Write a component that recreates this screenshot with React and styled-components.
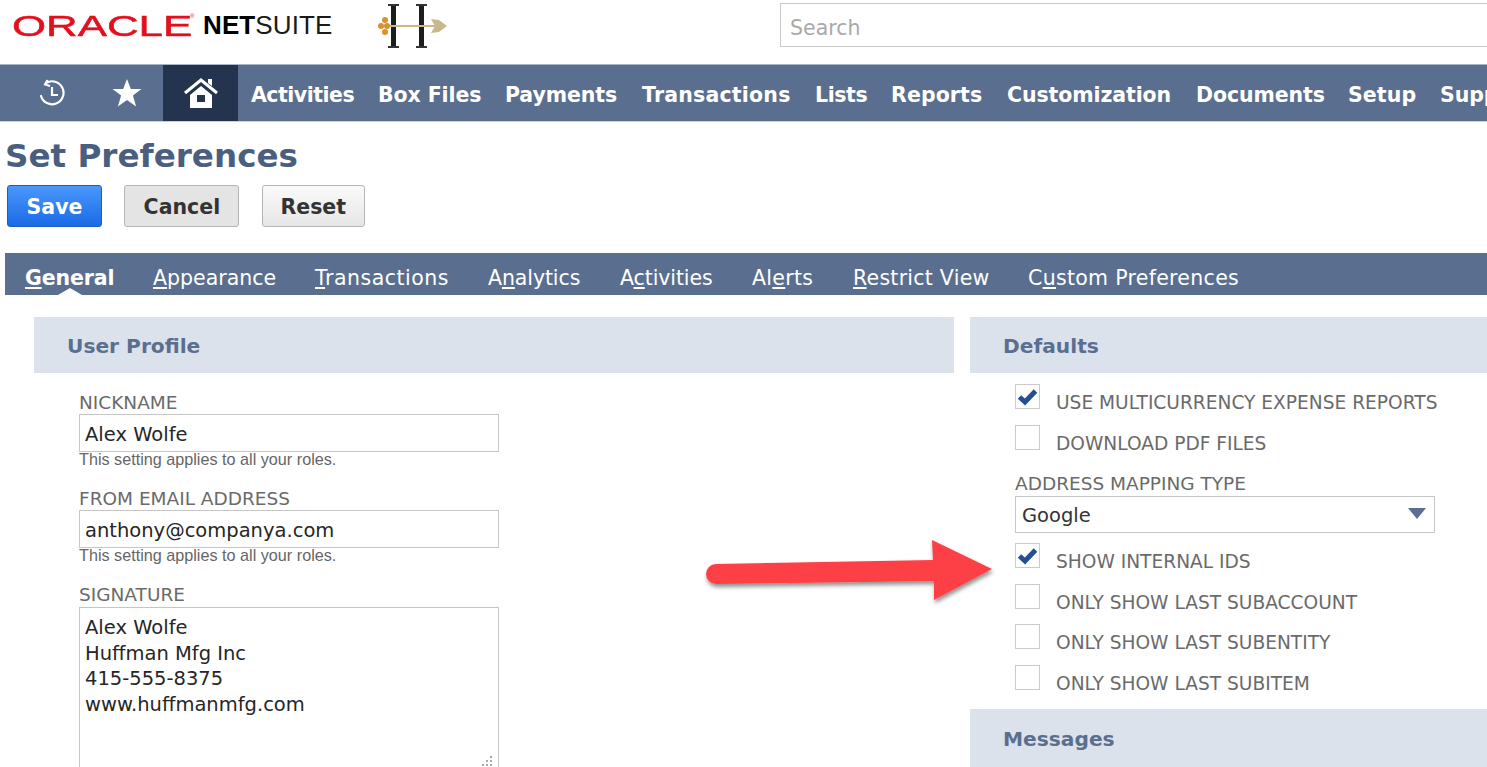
import React from "react";
import styled, { createGlobalStyle } from "styled-components";

const GlobalStyle = createGlobalStyle`
  html, body {
    margin: 0;
    padding: 0;
    height: 767px;
    overflow: hidden;
    background: #fff;
  }
  body {
    font-family: "DejaVu Sans", Verdana, sans-serif;
  }
`;

const Page = styled.div`
  position: relative;
  width: 1487px;
  height: 767px;
  overflow: hidden;
`;

const Header = styled.header`
  display: flex;
  align-items: flex-start;
  height: 64px;
  box-sizing: border-box;
`;

const LogoWrap = styled.div`
  display: flex;
  align-items: center;
  width: 780px;
  height: 51px;
  flex: none;
  padding-left: 12px;
  box-sizing: border-box;
`;

const OracleWord = styled.span`
  display: inline-block;
  flex: none;
  width: 178px;
  font-family: "Liberation Sans", Arial, sans-serif;
  font-size: 30px;
  line-height: 32px;
  font-weight: 400;
  color: #e2101d;
  white-space: nowrap;
  transform-origin: left center;
  transform: scaleX(1.46);
  -webkit-text-stroke: 0.5px #e2101d;
`;

const Registered = styled.span`
  flex: none;
  font-family: "Liberation Sans", Arial, sans-serif;
  font-size: 6px;
  color: #e2101d;
  align-self: flex-start;
  margin: 13px 0 0 0;
  width: 13px;
`;

const SuiteWord = styled.span`
  font-family: "Liberation Sans", Arial, sans-serif;
  font-size: 26px;
  color: #1a1a1a;
  white-space: nowrap;
  width: 170px;
  flex: none;
  letter-spacing: 0.1px;
  b {
    font-weight: 700;
    color: #000;
  }
`;

const SearchBox = styled.div`
  flex: none;
  width: 740px;
  height: 44px;
  margin-top: 3px;
  box-sizing: border-box;
  border: 1px solid #c9c9c9;
  padding: 5px 0 0 9px;
  display: flex;
  align-items: center;
  font-size: 20.5px;
  color: #a9a9a9;
`;

const NavBar = styled.nav`
  display: flex;
  align-items: stretch;
  height: 58px;
  background: #5a6f8f;
  border-top: 1px solid #a8b6c9;
  border-bottom: 1px solid #c6d0dc;
  box-sizing: border-box;
  white-space: nowrap;
`;

const NavIcon = styled.div`
  flex: none;
  width: ${(p) => p.$w}px;
  display: flex;
  align-items: center;
  justify-content: center;
  padding-left: ${(p) => p.$pad || 0}px;
  box-sizing: border-box;
  background: ${(p) => (p.$active ? "#24344f" : "transparent")};
`;

const NavItem = styled.div`
  flex: none;
  width: ${(p) => p.$w}px;
  display: flex;
  align-items: center;
  padding-top: 3px;
  font-size: 20.5px;
  font-weight: 700;
  letter-spacing: ${(p) => p.$ls ?? -0.1}px;
  color: #fff;
`;

const NavStart = styled.div`
  flex: none;
  width: 13px;
`;

const Title = styled.h1`
  margin: 0;
  padding: 14px 0 0 5px;
  height: 63px;
  box-sizing: border-box;
  font-size: 32.6px;
  line-height: 40px;
  font-weight: 700;
  color: #4a5f7f;
`;

const ButtonRow = styled.div`
  display: flex;
  align-items: flex-start;
  gap: 22.4px;
  padding-left: 7px;
  height: 68px;
`;

const Button = styled.button`
  height: 41.5px;
  width: ${(p) => p.$w}px;
  box-sizing: border-box;
  padding: 2px 0 0;
  border-radius: 3px;
  font-family: inherit;
  font-size: 20.5px;
  font-weight: 700;
  color: ${(p) => (p.$primary ? "#fff" : "#333")};
  border: 1px solid ${(p) => (p.$primary ? "#1a5fc0" : "#b5b5b5")};
  background: ${(p) =>
    p.$primary
      ? "linear-gradient(#4a98fb, #1a6ae8)"
      : p.$pressed
      ? "#e4e4e4"
      : "linear-gradient(#fafafa, #e6e6e6)"};
`;

const TabBar = styled.div`
  display: flex;
  align-items: center;
  height: 42px;
  margin-left: 5px;
  padding-left: 20px;
  background: #5a6f8f;
  white-space: nowrap;
`;

const Tab = styled.div`
  position: relative;
  flex: none;
  width: ${(p) => p.$w}px;
  padding-top: 7px;
  font-size: 20.5px;
  font-weight: ${(p) => (p.$active ? 700 : 400)};
  letter-spacing: ${(p) => p.$ls}px;
  color: #fff;
  u {
    text-underline-offset: 2px;
  }
  ${(p) =>
    p.$active &&
    `&::after {
      content: "";
      position: absolute;
      left: 33px;
      bottom: -5.5px;
      border-left: 12px solid transparent;
      border-right: 12px solid transparent;
      border-bottom: 7px solid #fff;
    }`}
`;

const Columns = styled.div`
  display: flex;
  gap: 16px;
  padding: 22px 0 0 34px;
`;

const LeftColumn = styled.section`
  flex: none;
  width: 920px;
`;

const RightColumn = styled.section`
  flex: none;
  width: 540px;
`;

const SectionHead = styled.h2`
  margin: 0;
  height: ${(p) => p.$h || 56}px;
  box-sizing: border-box;
  display: flex;
  align-items: center;
  padding: 2px 0 0 33px;
  background: #dce2ec;
  font-size: 20.2px;
  font-weight: 700;
  color: #5a6f8f;
`;

const FieldGroup = styled.div`
  padding: 18px 0 0 45px;
`;

const Field = styled.div`
  margin-bottom: 20px;
`;

const FieldLabel = styled.label`
  display: block;
  font-size: 18.5px;
  line-height: 23px;
  color: #6a6a6a;
`;

const TextInput = styled.div`
  box-sizing: border-box;
  width: 420px;
  height: 38px;
  border: 1px solid #c6c6c6;
  padding: 3px 0 0 5px;
  display: flex;
  align-items: center;
  font-size: 19.5px;
  color: #262626;
`;

const Hint = styled.div`
  font-family: "Liberation Sans", Arial, sans-serif;
  font-size: 16.2px;
  line-height: 15px;
  color: #666;
`;

const TextArea = styled.div`
  position: relative;
  box-sizing: border-box;
  width: 420px;
  height: 170px;
  margin-top: 1px;
  border: 1px solid #c6c6c6;
  padding: 7px 5px;
  font-size: 19.5px;
  line-height: 25.5px;
  color: #262626;
`;

const Grip = styled.svg`
  position: absolute;
  right: 4px;
  top: 146px;
`;

const RightBody = styled.div`
  padding: 11px 0 0 45px;
  height: 336px;
  box-sizing: border-box;
`;

const CheckRow = styled.div`
  display: flex;
  align-items: flex-start;
  height: 40.5px;
`;

const CheckBox = styled.span`
  flex: none;
  width: 25px;
  height: 25px;
  box-sizing: border-box;
  border: 1px solid #cbcbcb;
  margin-right: 16px;
  display: flex;
  align-items: center;
  justify-content: center;
`;

const CheckLabel = styled.span`
  font-size: 18.6px;
  line-height: 23px;
  padding-top: 7px;
  color: #6a6a6a;
  white-space: nowrap;
`;

const SelectLabel = styled(FieldLabel)`
  margin-top: 7px;
`;

const SelectBox = styled(TextInput)`
  position: relative;
  height: 37px;
  margin: 1px 0 10px;
  padding: 1px 0 0 6px;
  color: #333;
`;

const Caret = styled.span`
  position: absolute;
  right: 8px;
  top: 11px;
  width: 0;
  height: 0;
  border-left: 9px solid transparent;
  border-right: 9px solid transparent;
  border-top: 11px solid #5a6f8f;
`;

const Arrow = styled.svg`
  position: absolute;
  left: 700px;
  top: 535px;
`;

const HallmarkLogo = () => (
  <svg width="74" height="50" viewBox="0 0 74 50">
    <rect x="18" y="4" width="5" height="43" fill="#1d1d1d" />
    <rect x="15" y="3" width="11" height="2" fill="#333" />
    <rect x="15" y="45" width="11" height="2" fill="#333" />
    <rect x="46" y="4" width="5" height="43" fill="#1d1d1d" />
    <rect x="43" y="3" width="11" height="2" fill="#333" />
    <rect x="43" y="45" width="11" height="2" fill="#333" />
    <rect x="14" y="24" width="50" height="2" fill="#c8b88a" />
    <g fill="#d8912b">
      <circle cx="12" cy="19" r="3" />
      <circle cx="8" cy="25" r="3" />
      <circle cx="14" cy="25" r="3" />
      <circle cx="12" cy="31" r="3" />
    </g>
    <path d="M58 18 L66 19 L74 25 L66 31 L58 32 L62 25 Z" fill="#c9b88c" />
  </svg>
);

const HistoryIcon = () => (
  <svg width="28" height="28" viewBox="0 0 28 28" fill="none" stroke="#fff" strokeWidth="2.2">
    <path d="M3 17a11.5 11.5 0 1 0 5-13" strokeLinecap="round" />
    <path d="M9.5 1 L7 5.5 L12 7" strokeWidth="2" />
    <path d="M14 8v8h6" />
  </svg>
);

const StarIcon = () => (
  <svg width="30" height="28" viewBox="0 0 30 28" fill="#fff">
    <path d="M15 0l3.8 10h10.7l-8.6 6.6 3.2 10.9L15 21l-9.1 6.5 3.2-10.9L.5 10h10.7z" />
  </svg>
);

const HomeIcon = () => (
  <svg width="34" height="30" viewBox="0 0 34 30">
    <path d="M1 15 L17 2 L33 15" fill="none" stroke="#fff" strokeWidth="3" />
    <path d="M24 1h4v7l-4-3z" fill="#fff" />
    <path d="M6 17 L17 8 L28 17 V30 H6Z" fill="#fff" />
    <rect x="13" y="17" width="8" height="7" fill="#24344f" />
  </svg>
);

const Check = () => (
  <svg width="22" height="20" viewBox="0 0 22 20">
    <path d="M2.5 10 L8 15 L18.5 4" fill="none" stroke="#24508f" strokeWidth="5" />
  </svg>
);

const navItems = [
  ["Activities", 127, -0.5],
  ["Box Files", 127],
  ["Payments", 137],
  ["Transactions", 173, 0.2],
  ["Lists", 76, -0.4],
  ["Reports", 116, 0.1],
  ["Customization", 189],
  ["Documents", 152],
  ["Setup", 92, 0.1],
  ["Support", 100],
];

const tabs = [
  { pre: "", key: "G", post: "eneral", w: 128, ls: -0.1, active: true },
  { pre: "", key: "A", post: "ppearance", w: 162, ls: 0 },
  { pre: "", key: "T", post: "ransactions", w: 173, ls: 0.5 },
  { pre: "A", key: "n", post: "alytics", w: 132, ls: -0.1 },
  { pre: "A", key: "c", post: "tivities", w: 132, ls: -0.1 },
  { pre: "Al", key: "e", post: "rts", w: 101, ls: 0.3 },
  { pre: "", key: "R", post: "estrict View", w: 175, ls: 0.25 },
  { pre: "C", key: "u", post: "stom Preferences", w: 220, ls: 0.3 },
];

const CheckItem = ({ checked, children }) => (
  <CheckRow>
    <CheckBox>{checked && <Check />}</CheckBox>
    <CheckLabel>{children}</CheckLabel>
  </CheckRow>
);

export default function App() {
  return (
    <Page>
      <GlobalStyle />
      <Header>
        <LogoWrap>
          <OracleWord>ORACLE</OracleWord>
          <Registered>®</Registered>
          <SuiteWord>
            <b>NET</b>SUITE
          </SuiteWord>
          <HallmarkLogo />
        </LogoWrap>
        <SearchBox>Search</SearchBox>
      </Header>

      <NavBar>
        <NavIcon $w={90} $pad={14}>
          <HistoryIcon />
        </NavIcon>
        <NavIcon $w={73}>
          <StarIcon />
        </NavIcon>
        <NavIcon $w={75} $active>
          <HomeIcon />
        </NavIcon>
        <NavStart />
        {navItems.map(([label, w, ls]) => (
          <NavItem key={label} $w={w} $ls={ls}>
            {label}
          </NavItem>
        ))}
      </NavBar>

      <Title>Set Preferences</Title>
      <ButtonRow>
        <Button $primary $w={95}>Save</Button>
        <Button $pressed $w={115}>Cancel</Button>
        <Button $w={103}>Reset</Button>
      </ButtonRow>

      <TabBar>
        {tabs.map((t) => (
          <Tab key={t.key + t.post} $w={t.w} $ls={t.ls} $active={t.active}>
            {t.pre}
            <u>{t.key}</u>
            {t.post}
          </Tab>
        ))}
      </TabBar>

      <Columns>
        <LeftColumn>
          <SectionHead>User Profile</SectionHead>
          <FieldGroup>
            <Field>
              <FieldLabel>NICKNAME</FieldLabel>
              <TextInput>Alex Wolfe</TextInput>
              <Hint>This setting applies to all your roles.</Hint>
            </Field>
            <Field>
              <FieldLabel>FROM EMAIL ADDRESS</FieldLabel>
              <TextInput>anthony@companya.com</TextInput>
              <Hint>This setting applies to all your roles.</Hint>
            </Field>
            <Field>
              <FieldLabel>SIGNATURE</FieldLabel>
              <TextArea>
                Alex Wolfe
                <br />
                Huffman Mfg Inc
                <br />
                415-555-8375
                <br />
                www.huffmanmfg.com
                <Grip width="14" height="14" viewBox="0 0 14 14" fill="#aaa">
                  <rect x="10" y="2" width="2" height="2" />
                  <rect x="6" y="6" width="2" height="2" />
                  <rect x="10" y="6" width="2" height="2" />
                  <rect x="2" y="10" width="2" height="2" />
                  <rect x="6" y="10" width="2" height="2" />
                  <rect x="10" y="10" width="2" height="2" />
                </Grip>
              </TextArea>
            </Field>
          </FieldGroup>
        </LeftColumn>

        <RightColumn>
          <SectionHead>Defaults</SectionHead>
          <RightBody>
            <CheckItem checked>USE MULTICURRENCY EXPENSE REPORTS</CheckItem>
            <CheckItem>DOWNLOAD PDF FILES</CheckItem>
            <SelectLabel>ADDRESS MAPPING TYPE</SelectLabel>
            <SelectBox>
              Google
              <Caret />
            </SelectBox>
            <CheckItem checked>SHOW INTERNAL IDS</CheckItem>
            <CheckItem>ONLY SHOW LAST SUBACCOUNT</CheckItem>
            <CheckItem>ONLY SHOW LAST SUBENTITY</CheckItem>
            <CheckItem>ONLY SHOW LAST SUBITEM</CheckItem>
          </RightBody>
          <SectionHead $h={58}>Messages</SectionHead>
        </RightColumn>
      </Columns>

      <Arrow width="310" height="80" viewBox="0 0 310 80">
        <defs>
          <filter id="arrowShadow" x="-5%" y="-10%" width="110%" height="130%">
            <feDropShadow dx="1" dy="3" stdDeviation="2" floodColor="#000" floodOpacity="0.45" />
          </filter>
        </defs>
        <path
          d="M16 29 L233 25 L232 5 L292 34 L234 65 L234 46 L16 49 A10 10 0 0 1 16 29 Z"
          fill="#fd4044"
          filter="url(#arrowShadow)"
        />
      </Arrow>
    </Page>
  );
}
